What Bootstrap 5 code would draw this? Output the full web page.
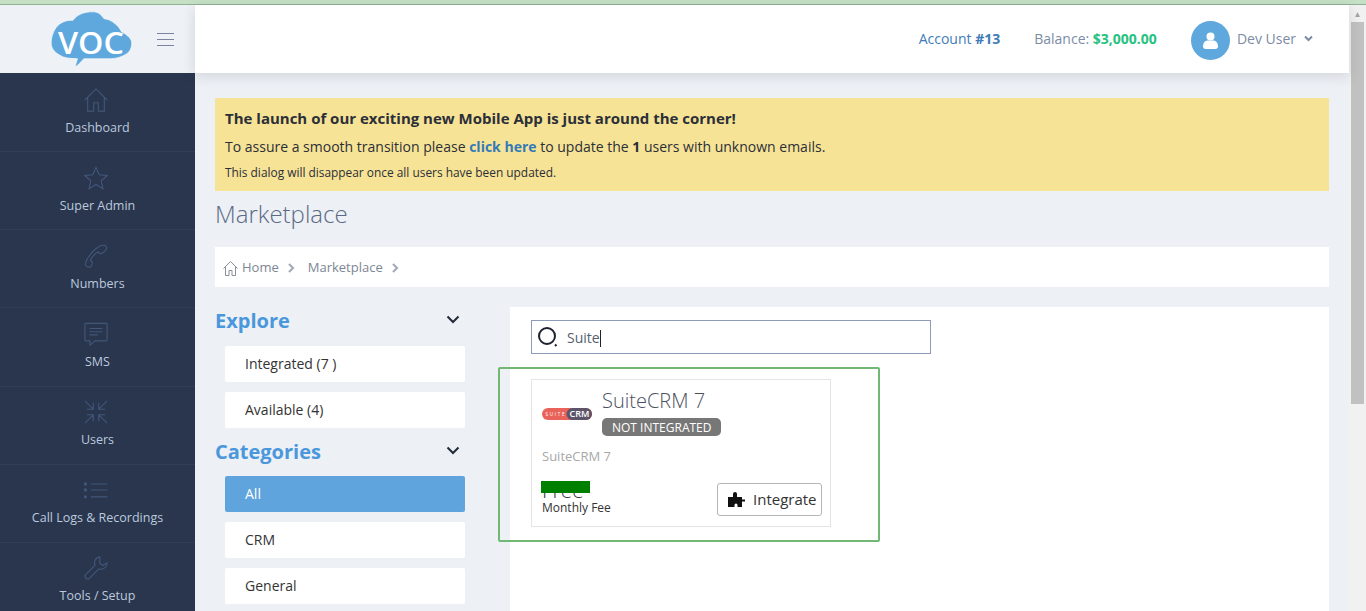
<!DOCTYPE html>
<html lang="en">
<head>
<meta charset="utf-8">
<title>Marketplace</title>
<link href="https://cdn.jsdelivr.net/npm/bootstrap@5.3.0/dist/css/bootstrap.min.css" rel="stylesheet">
<style>
html,body{height:611px;overflow:hidden;}
body{font-family:"Open Sans","Liberation Sans",sans-serif;font-size:14px;background:#edf0f5;color:#2b2f38;}
.top-strip{height:5px;background:#c5e0c5;border-bottom:1px solid #8fb396;}
.shell{height:606px;}
.app-area{width:1349px;}
.scroll-track{width:17px;background:#f1f1f1;position:relative;}
.scroll-arrow{height:17px;color:#a3a3a3;font-size:8px;line-height:17px;text-align:center;}
.scroll-thumb{height:382px;background:#c1c1c1;margin:0 2px;}
.logo-zone{width:195px;height:68px;background:#eef1f6;padding-left:50px;padding-right:21px;flex:none;}
.head-bar{height:68px;background:#fff;box-shadow:0 3px 12px rgba(60,70,90,.16);position:relative;z-index:2;padding-right:36px;}
.acct{color:#3f7cb8;margin-right:34px;margin-bottom:2px;}
.bal{color:#7c8ca5;margin-right:34px;margin-bottom:2px;}
.bal b{color:#26c281;}
.avatar{width:39px;height:39px;background:#5fa8dd;border-radius:50%;margin-right:7px;margin-top:2px;}
.dev{color:#7c8ca5;margin-right:8px;margin-bottom:2px;}
.caret-dev{margin-bottom:1px;}
.side{width:195px;background:#29364d;height:538px;overflow:hidden;flex:none;padding-top:1px;}
.side-item{height:78px;border-bottom:1px solid #303e56;text-align:center;color:#bcc9de;font-size:12.5px;padding-top:14px;}
.side-item:nth-child(4){height:79px;}
.side-item:nth-child(n+5){padding-top:13px;}
.side-item svg{display:block;margin:0 0 7px 84px;width:24px;height:24px;fill:none;stroke:#43577a;stroke-width:1.2;}
.side-item span{display:block;line-height:18px;}
.main-col{padding:25px 20px 0;min-width:0;width:1154px;height:538px;overflow:hidden;}
.notice{background:#f7e396;height:93px;padding:10px 10px;color:#2b2f38;}
.notice .n1{font-size:15px;font-weight:700;line-height:21px;margin-bottom:8px;}
.notice .n2{font-size:14px;line-height:20px;margin-bottom:6px;}
.notice .n2 a{color:#337ab7;font-weight:700;text-decoration:none;}
.notice .n3{font-size:11.9px;line-height:18px;}
.page-ttl{font-size:24px;font-weight:300;color:#5a6a85;line-height:34px;margin:6px 0 16px;}
.crumbs{background:#fff;height:40px;padding:2px 8px 0;color:#7c8694;font-size:13px;margin-bottom:20px;}
.crumbs .chev{margin:0 13px 0 9px;}
.left-col{width:295px;padding-right:45px;flex:none;}
.sec-ttl{font-size:20px;font-weight:700;color:#4a97dc;line-height:28px;}
.sec-head{padding-right:5px;margin-bottom:11px;}
.sec-head svg{margin-bottom:4px;}
.side-btn{background:#fff;height:36px;margin:0 0 10px 10px;line-height:36px;padding-left:20px;border-radius:2px;color:#333;}
.side-btn.on{background:#5fa4dd;color:#fff;}
.cat-head{margin-bottom:10px;}
.market-panel{background:#fff;flex:1;padding:13px 21px;height:320px;}
.search-box{width:400px;height:34px;border:1px solid #8e9bb8;padding-left:5px;color:#555f6e;}
.caret-bar{display:inline-block;width:1px;height:17px;background:#222;vertical-align:-4px;}
.int-card{width:300px;height:148px;border:1px solid #e5e5e5;margin-top:25px;padding:9px 8px 9px 10px;}
.crm-logo{width:50px;height:12px;flex:none;margin-right:10px;margin-top:19px;}
.crm-name{font-size:20px;font-weight:300;color:#4a5160;line-height:24px;}
.crm-status{display:block;width:fit-content;background:#777;color:#fff;font-size:12px;line-height:17px;padding:1px 10px 0;border-radius:5px;margin-top:5px;}
.crm-desc{font-size:13px;color:#a8a8a8;line-height:18px;margin-top:11px;}
.fee-wrap{position:relative;}
.fee-val{font-size:21px;line-height:20px;color:#333;font-weight:300;}
.fee-mask{position:absolute;left:-1px;top:1px;width:49px;height:12px;background:#008000;}
.fee-lab{font-size:12px;line-height:16px;color:#333;}
.fee-row{margin-top:15px;}
.btn.int-btn{font-size:15px;padding:0 0 0 10px;width:105px;height:33px;line-height:31px;border:1px solid #b5b5b5;border-radius:3px;color:#333;background:#fff;}
.puzzle{margin-right:8px;}
.mark-box{position:absolute;left:498px;top:367px;width:382px;height:175px;border:2px solid #72b875;border-radius:2px;z-index:5;pointer-events:none;}
</style>
</head>
<body>
<div class="top-strip"></div>
<div class="shell d-flex">
  <div class="app-area">
    <div class="d-flex">
      <div class="logo-zone d-flex align-items-center justify-content-between">
        <svg width="83" height="57" viewBox="0 0 83 57">
          <path d="M25 56L27.500 47.700C20 47.700 14 47 10 44.300C4 41 1 37 1.200 31C1.500 24 5 16 10 12.700C14 10 19 9 23 9.300C26 5 31 2 37 1.200C42 .5 47 .5 50 3C52 5 53 6.500 54 7.700C58 8 62 10 65 12.700C68 14.500 70 18 71.700 21C76 23 81 27 81.700 31C82 36 80 41 76.700 42.700C72 46 66 47.700 60 47.700H34C31 50 29 54 25 56z" fill="#5fa8dd" stroke="#fff" stroke-width=".6"/>
          <text x="41" y="42.500" text-anchor="middle" font-family="Open Sans, sans-serif" font-weight="600" font-size="30" fill="#fff" textLength="66" lengthAdjust="spacingAndGlyphs">VOC</text>
        </svg>
        <svg width="17" height="13" viewBox="0 0 17 13" stroke="#7a84a0" stroke-width="1"><path d="M0 .5h17M0 6.500h17M0 12.500h17"/></svg>
      </div>
      <div class="head-bar flex-grow-1 d-flex align-items-center justify-content-end">
        <span class="acct">Account <b>#13</b></span>
        <span class="bal">Balance: <b>$3,000.00</b></span>
        <span class="avatar d-flex align-items-center justify-content-center">
          <svg width="15" height="17" viewBox="0 0 15 17" fill="#fff"><circle cx="7.500" cy="4.500" r="4"/><path d="M0 14.500c0-4 2.500-6 4.500-6h6c2 0 4.500 2 4.500 6 0 1.500-1 2.500-2.500 2.500h-10C1 17 0 16 0 14.500z"/></svg>
        </span>
        <span class="dev">Dev User</span>
        <svg class="caret-dev" width="9" height="7" viewBox="0 0 9 7" fill="none" stroke="#7c8ca5" stroke-width="2"><path d="M1 1.500l3.500 3.500L8 1.500"/></svg>
      </div>
    </div>
    <div class="d-flex">
      <nav class="side">
        <div class="side-item"><svg viewBox="0 0 26 26"><path d="M1 13L13 1l12 12M4 10.500V25h6.500v-9h5v9H22V10.500"/></svg><span>Dashboard</span></div>
        <div class="side-item"><svg viewBox="0 0 26 26"><path d="M13 1.500l3.500 8 8.500.8-6.400 5.700 1.900 8.500L13 20l-7.500 4.500L7.400 16 1 10.300l8.500-.8z"/></svg><span>Super Admin</span></div>
        <div class="side-item"><svg viewBox="0 0 26 26"><path d="M24.500 5c.5-1.500-.5-2.800-2-3.500-7-1.500-19 11-21 20-.3 1.500.5 2.500 2 3l2 .5c1 .2 1.800-.2 2.200-1l1.300-3c.3-.8 0-1.500-.6-2l-1.700-1c1.500-3.500 5-7.500 8.500-9.500l1.500 1.500c.6.500 1.300.6 2 .2l3-1.500c1-.5 1.500-1.200 1.600-2z"/></svg><span>Numbers</span></div>
        <div class="side-item"><svg viewBox="0 0 26 26"><path d="M2 1.500h22a1 1 0 0 1 1 1v17a1 1 0 0 1-1 1H12l-5.500 4.500v-4.500H2a1 1 0 0 1-1-1v-17a1 1 0 0 1 1-1zM6 7h14M6 10.500h14M6 14h9"/></svg><span>SMS</span></div>
        <div class="side-item"><svg viewBox="0 0 26 26" stroke-width="1.400"><path d="M1 1l9 9M10 3v7H3M25 1l-9 9M16 3v7h7M1 25l9-9M3 16h7v7M25 25l-9-9M23 16h-7v7"/></svg><span>Users</span></div>
        <div class="side-item"><svg viewBox="0 0 26 26"><path d="M7.500 6.500h18M7.500 13h18M7.500 20.500h18"/><path d="M0 5h3v3H0zM0 11.500h3v3H0zM0 19h3v3H0z" fill="#43577a" stroke="none"/></svg><span>Call Logs &amp; Recordings</span></div>
        <div class="side-item"><svg viewBox="0 0 26 26"><path d="M17 1c-3.500.5-6 3.500-5.500 7 .1.700.3 1.300.5 1.800L1.500 20.500c-.8.800-.8 2 0 2.800l1.200 1.200c.8.800 2 .8 2.800 0L16.200 14c.8.300 1.700.4 2.600.3 3.500-.4 6-3.500 6.200-7l-4.500 3-3.500-2.500.2-4z"/></svg><span>Tools / Setup</span></div>
      </nav>
      <main class="main-col">
        <div class="notice">
          <div class="n1">The launch of our exciting new Mobile App is just around the corner!</div>
          <div class="n2">To assure a smooth transition please <a href="#">click here</a> to update the <b>1</b> users with unknown emails.</div>
          <div class="n3">This dialog will disappear once all users have been updated.</div>
        </div>
        <h1 class="page-ttl">Marketplace</h1>
        <div class="crumbs d-flex align-items-center">
          <svg width="15" height="15" viewBox="0 0 15 15" fill="none" stroke="#8a8f98" class="me-1"><path d="M.5 7.500l7-7 7 7M2.500 6v8.500h3.500v-5h3v5h3.500V6"/></svg>
          <span>Home</span>
          <svg class="chev" width="7" height="10" viewBox="0 0 7 10" fill="none" stroke="#a5adb8" stroke-width="2.200"><path d="M1 1l4 4-4 4"/></svg>
          <span>Marketplace</span>
          <svg class="chev" width="7" height="10" viewBox="0 0 7 10" fill="none" stroke="#a5adb8" stroke-width="2.200"><path d="M1 1l4 4-4 4"/></svg>
        </div>
        <div class="d-flex">
          <div class="left-col">
            <div class="sec-head d-flex justify-content-between align-items-center">
              <span class="sec-ttl">Explore</span>
              <svg width="14" height="9" viewBox="0 0 14 9" fill="none" stroke="#222b3a" stroke-width="2"><path d="M1.500 1.500L7 7l5.500-5.500"/></svg>
            </div>
            <div class="side-btn">Integrated (7 )</div>
            <div class="side-btn">Available (4)</div>
            <div class="sec-head cat-head d-flex justify-content-between align-items-center">
              <span class="sec-ttl">Categories</span>
              <svg width="14" height="9" viewBox="0 0 14 9" fill="none" stroke="#222b3a" stroke-width="2"><path d="M1.500 1.500L7 7l5.500-5.500"/></svg>
            </div>
            <div class="side-btn on">All</div>
            <div class="side-btn">CRM</div>
            <div class="side-btn">General</div>
          </div>
          <div class="market-panel">
            <div class="search-box d-flex align-items-center">
              <svg width="22" height="22" viewBox="0 0 22 22" fill="none" stroke="#1d2230" class="me-2"><circle cx="10" cy="10" r="8" stroke-width="2"/><path d="M18 18.500l1.500 1.500" stroke-width="2"/></svg>
              <span>Suite<span class="caret-bar"></span></span>
            </div>
            <div class="int-card">
              <div class="d-flex">
                <svg class="crm-logo" viewBox="0 0 50 12">
                  <rect width="50" height="12" rx="6" fill="#e9635a"/>
                  <rect x="24.500" width="25.500" height="12" rx="6" fill="#5c5468"/>
                  <text x="3.500" y="7.800" font-size="4.500" fill="#fff" font-family="Open Sans, sans-serif" textLength="19">SUITE</text>
                  <text x="37.500" y="9.300" text-anchor="middle" font-size="8.500" fill="#fff" font-weight="600" font-family="Open Sans, sans-serif" textLength="20" lengthAdjust="spacingAndGlyphs">CRM</text>
                </svg>
                <div>
                  <div class="crm-name">SuiteCRM 7</div>
                  <span class="crm-status">NOT INTEGRATED</span>
                </div>
              </div>
              <div class="crm-desc">SuiteCRM 7</div>
              <div class="fee-row d-flex justify-content-between align-items-end">
                <div class="fee-wrap">
                  <div class="fee-val">Free</div>
                  <div class="fee-lab">Monthly Fee</div>
                  <div class="fee-mask"></div>
                </div>
                <button class="btn int-btn d-flex align-items-center" type="button">
                  <svg class="puzzle" width="17" height="15" viewBox="0 0 17 15" fill="#111"><path d="M0 5h5V2a2 2 0 0 1 4 0v3h5v2.500h3v2h-3V15H9.500v-2a1.500 1.500 0 0 0-3 0v2H0z"/></svg>
                  Integrate
                </button>
              </div>
            </div>
          </div>
        </div>
      </main>
    </div>
  </div>
  <div class="scroll-track">
    <div class="scroll-arrow">&#9650;</div>
    <div class="scroll-thumb"></div>
  </div>
</div>
<div class="mark-box"></div>
</body>
</html>
